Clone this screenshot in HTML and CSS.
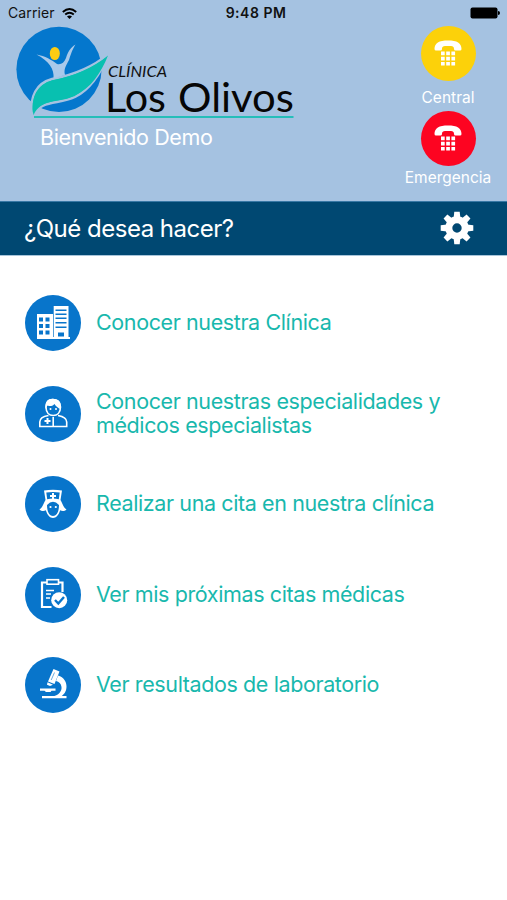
FILE: index.html
```html
<!DOCTYPE html>
<html lang="es">
<head>
<meta charset="utf-8">
<title>Clínica Los Olivos</title>
<link rel="stylesheet" href="styles.css">
</head>
<body>
<header class="header">
  <div class="status">
    <div class="carrier"><span>Carrier</span>
      <svg width="15" height="11" viewBox="0 0 15 11"><g fill="none" stroke="#000" stroke-width="1.9"><path d="M.8 4Q7.5-2 14.2 4"/><path d="M3.2 6.5Q7.5 2.8 11.8 6.5"/></g><path d="M5 8.4Q7.5 6.4 10 8.4L7.5 11Z"/></svg>
    </div>
    <time class="clock">9:48 PM</time>
    <svg class="battery" width="30" height="12" viewBox="0 0 30 12"><rect x=".5" y=".4" width="27" height="11.2" rx="2"/><path d="M28 4Q30 4 30 6T28 8Z"/></svg>
  </div>
  <div class="top">
    <div class="brand">
      <svg class="logo" width="284" height="94" viewBox="14 26 284 94">
        <circle cx="59" cy="69.3" r="42.6" fill="#0477cd"/>
        <path d="M32 116C29 96 37 83 52 79C74 75 93 67 108.500 54C101 73 91 89 75 97C58 105 42 99 32 116Z" fill="#08c0b0" stroke="#a5c2e1" stroke-width="2.4"/>
        <path d="M33.500 115C30.500 98 37 85 52 80.500C74 76 93 68 108 55.500C101 73 91 88 75 95.500C58 103 42 98 33.500 115Z" fill="#08c0b0"/>
        <path d="M36.500 54.500C45 56 52 60 57 64C61 65 64 63 66 58C68 52 70 48 75.500 44.500C72 50 71 54 69 60C66 66 63.500 69 65 75L53.500 78.500C54.500 69 49 61 36.500 54.500Z" fill="#a9c9ea"/>
        <ellipse cx="54.800" cy="53.500" rx="5" ry="6.600" fill="#fccc12"/>
        <path d="M34 117H293.500" stroke="#25beb9" stroke-width="1.900"/>
        <text class="logo-small" x="108" y="77" textLength="59" lengthAdjust="spacingAndGlyphs">CLÍNICA</text>
        <text class="logo-large" x="105" y="111.500" textLength="61" lengthAdjust="spacingAndGlyphs">Los</text>
        <text class="logo-large" x="178" y="111.500" textLength="116" lengthAdjust="spacingAndGlyphs">Olivos</text>
      </svg>
      <p class="welcome">Bienvenido Demo</p>
    </div>
    <nav class="calls">
      <a class="call"><span class="disc yellow"><svg width="28" height="26" viewBox="0 0 28 26"><use href="#phone"/></svg></span><span class="central">Central</span></a>
      <a class="call"><span class="disc red"><svg width="28" height="26" viewBox="0 0 28 26"><use href="#phone"/></svg></span><span class="emergency">Emergencia</span></a>
    </nav>
  </div>
</header>
<section class="bar">
  <h1>¿Qué desea hacer?</h1>
  <svg width="34" height="34" viewBox="-17 -17 34 34">
    <defs><path id="tooth" d="M-3.400-10L-2.700-16.300H2.700L3.400-10Z"/></defs>
    <g fill="#fff"><use href="#tooth"/><use href="#tooth" transform="rotate(45)"/><use href="#tooth" transform="rotate(90)"/><use href="#tooth" transform="rotate(135)"/><use href="#tooth" transform="rotate(180)"/><use href="#tooth" transform="rotate(225)"/><use href="#tooth" transform="rotate(270)"/><use href="#tooth" transform="rotate(315)"/></g>
    <circle r="8.200" fill="none" stroke="#fff" stroke-width="7"/>
  </svg>
</section>
<main class="menu">
  <a class="item"><svg class="icon" viewBox="0 0 56 56"><circle cx="28" cy="28" r="28"/>
    <g fill="#fff"><path d="M12 19H28V43H12ZM28.700 11H43.500V42H45V44H12V42H28.700Z"/></g>
    <g fill="#0875cb"><path d="M14 22.500h4v4h-4zM20.500 22.500h4v4h-4zM14 29h4v4h-4zM20.500 29h4v4h-4zM14 35.500h4v4h-4zM20.500 35.500h4v4h-4zM30.500 14.500h11v1.500h-11zM30.500 18.500h11V20h-11zM30.500 22.500h11V24h-11zM30.500 27h11v1.500h-11zM30.500 31.500h11V33h-11zM33 37.500h6v4h-6z"/></g></svg><span>Conocer nuestra Clínica</span></a>
  <a class="item"><svg class="icon" viewBox="0 0 56 56"><circle cx="28" cy="28" r="28"/>
    <g fill="none" stroke="#fff" stroke-width="1.600"><path d="M21 21C21 16 24 13.500 28 13.500S35.500 16 35.500 21C35.500 27 32 29.500 28.200 29.500S21 27 21 21Z"/><path d="M23.500 29.500C17.500 30.500 14.800 32 14.800 36V40.500H41.700V36C41.700 32 38.500 30.500 33 29.500M28.200 31V40.500"/><path d="M22.500 32v6M19.500 35h6" stroke-width="2"/></g>
    <path fill="#fff" d="M20.500 23C19.500 14 25 12 29 13C34 13 37 17 35.500 23C33 22 31 20.500 29.500 18C27 21 23 20 22.300 19.500Z"/><g fill="#fff"><circle cx="25.500" cy="23" r="1"/><circle cx="31" cy="23" r="1"/></g></svg><span>Conocer nuestras especialidades y<br>médicos especialistas</span></a>
  <a class="item"><svg class="icon" viewBox="0 0 56 56"><circle cx="28" cy="28" r="28"/>
    <path fill="#fff" d="M19 14.500Q28 13 37 14.500L35.500 24C37.500 27 38 31 41.500 33.500C39.500 35.500 37 35.500 35.200 34.300C33.500 39.500 31 42 28 42S22.500 39.500 20.800 34.300C19 35.500 16.500 35.500 14.500 33.500C18 31 18.500 27 20.500 24Z"/>
    <path fill="#0875cb" d="M21.300 16.500Q28 15.500 34.700 16.500L33.800 23.300Q28 21.700 22.200 23.300ZM22 29Q28 22.500 34 29C34 36 31.500 40 28 40S22 36 22 29Z"/>
    <path d="M28 17v6M25 20h6" stroke="#fff" stroke-width="2"/><g fill="#fff"><circle cx="25.500" cy="31" r="1.100"/><circle cx="30.800" cy="31" r="1.100"/></g></svg><span>Realizar una cita en nuestra clínica</span></a>
  <a class="item"><svg class="icon" viewBox="0 0 56 56"><circle cx="28" cy="28" r="28"/>
    <path d="M37.500 25V15.500H17V40H26.500" fill="none" stroke="#fff" stroke-width="2.200"/><rect x="22" y="12.700" width="11.500" height="4.500" fill="#0875cb" stroke="#fff" stroke-width="1.600"/><path d="M21 23.500h8M21 27h5M21 31h4" stroke="#fff" stroke-width="1.500"/>
    <circle class="check" cx="34.200" cy="33.200" r="8"/><path d="M30 33L33.300 36.500L39 30" fill="none" stroke="#0875cb" stroke-width="2.400"/></svg><span>Ver mis próximas citas médicas</span></a>
  <a class="item"><svg class="icon" viewBox="0 0 56 56"><circle cx="28" cy="28" r="28"/>
    <g fill="#fff"><path d="M28.500 12L34.500 14.500L29.500 27L23 24.400ZM22.500 25.300L28 27.700L25 29L22 27.700ZM15 31.500H30.500V33.800H26.500L25.500 35H21L19.500 33.800H15ZM17 39H41.500V41.200H17Z"/><path d="M33 18.500C39 20 41.500 25 41.500 29.500C41.500 34.500 39 37.500 36 39.500H28C34 38 37 34 36.500 30C36.200 26.500 34 24.500 31 24Z"/></g><path d="M29.500 15.500L26.200 23" stroke="#0875cb" stroke-width=".6"/></svg><span>Ver resultados de laboratorio</span></a>
</main>
<svg width="0" height="0" class="defs"><defs><g id="phone" fill="#fff"><path d="M.5 9C.5 3 5 .5 14 .5S27.500 3 27.500 9Q27.500 10.500 26 10.500H21.500Q20 10.500 20 9C20 6.500 19 6 14 6S8 6.500 8 9Q8 10.500 6.500 10.500H2Q.5 10.500.5 9Z"/><path d="M7 11.500h3.700v3.700H7zM12.200 11.500h3.700v3.700h-3.700zM17.400 11.500h3.700v3.700h-3.700zM7 16.700h3.700v3.700H7zM12.200 16.700h3.700v3.700h-3.700zM17.400 16.700h3.700v3.700h-3.700zM7 21.900h3.700v3.700H7zM12.200 21.900h3.700v3.700h-3.700zM17.400 21.900h3.700v3.700h-3.700z"/></g></defs></svg>
</body>
</html>
```
FILE: styles.css
```css
* { box-sizing: border-box; }
body { margin: 0; height: 900px; background: #fff; font-family: Inter, "Liberation Sans", sans-serif; display: flex; flex-direction: column; }
svg { display: block; flex: none; }
.defs { position: absolute; }
.header { height: 200.500px; background: #a5c2e1; flex: none; }
.status { height: 26px; padding: 0 7px 0 8px; display: grid; grid-template-columns: 1fr auto 1fr; align-items: center; font-size: 14px; color: #111; line-height: 26px; }
.carrier { display: flex; align-items: center; gap: 7px; font-size: 14px; letter-spacing: 0.1px; }
.clock { font-weight: 600; font-size: 14px; letter-spacing: 0.5px; padding-left: 4px; }
.battery { justify-self: end; }
.top { display: flex; justify-content: space-between; padding: 0 14px; }
.logo-small { font: italic 15.500px Lato, sans-serif; fill: #111; }
.logo-large { font: 41px Lato, sans-serif; fill: #060606; }
.welcome { margin: 3px 0 0 26px; color: #fff; font-size: 21.500px; line-height: 28px; letter-spacing: -0.38px; white-space: nowrap; }
.calls { width: 90px; display: flex; flex-direction: column; align-items: center; }
.call { display: flex; flex-direction: column; align-items: center; color: #fff; font-size: 15.500px; }
.disc { width: 55px; height: 55px; border-radius: 50%; display: flex; justify-content: center; padding-top: 14px; }
.yellow { background: #fcd10a; }
.red { background: #fd0421; }
.central { line-height: 20px; margin: 7px 0 3px; }
.emergency { line-height: 20px; margin-top: 2px; }
.bar { height: 55.500px; flex: none; background: #004872; border-bottom: 1px solid #a8c5da; border-top: 1px solid #3878a5; padding: 0 33px 0 24px; display: flex; align-items: center; justify-content: space-between; }
h1 { margin: 0; color: #fff; font-weight: 400; font-size: 24px; letter-spacing: -0.5px; }
.menu { padding: 39px 0 0 25px; display: flex; flex-direction: column; gap: 34.500px; }
.item { height: 56px; display: flex; align-items: center; gap: 15px; color: #18b8ad; font-size: 21.500px; line-height: 24.500px; letter-spacing: -0.39px; white-space: nowrap; }
.item span { padding-bottom: 1px; }
.icon { width: 56px; height: 56px; fill: #0875cb; }
.check { fill: #fff; }
```
